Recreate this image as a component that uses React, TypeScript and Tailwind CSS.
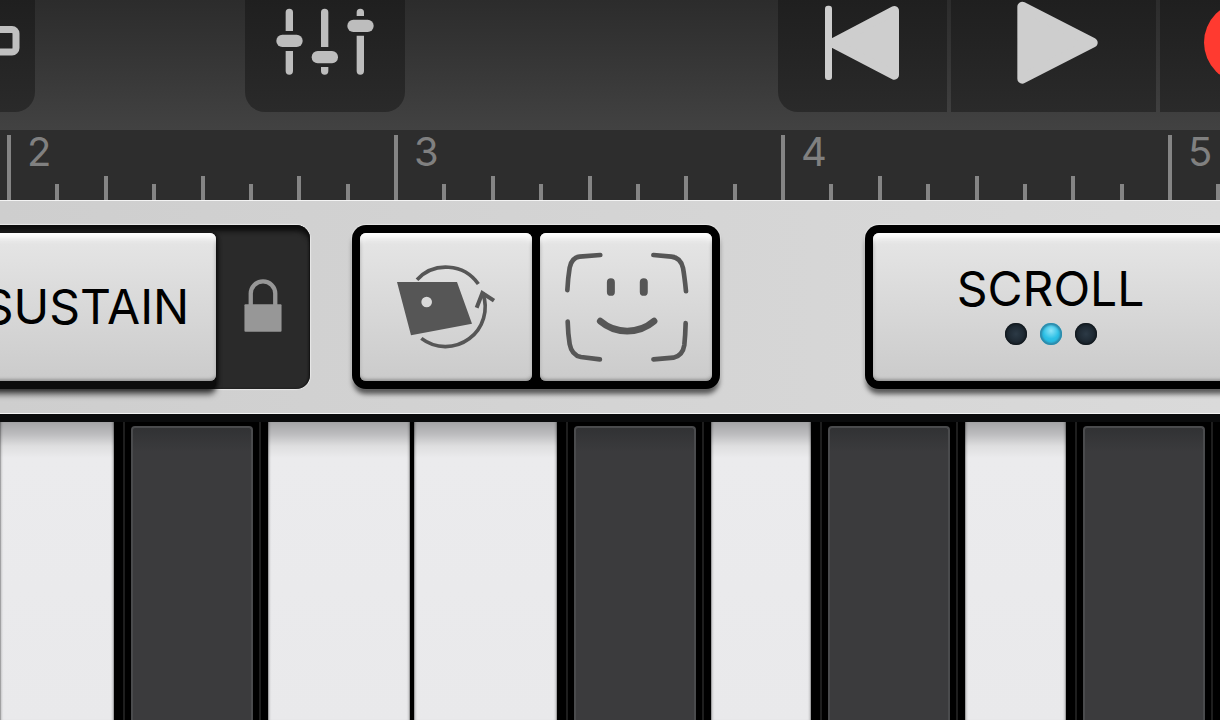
import type { ReactNode } from "react";

const WELL = "rounded-[14px] bg-black p-2 shadow-[0_6px_5px_-1px_rgba(0,0,0,0.6),0_0_1px_1px_rgba(255,255,255,0.4)]";
const CAP =
  "rounded-[6px] bg-linear-to-b from-[#e6e6e6] to-[#cbcbcb] shadow-[inset_0_8px_6px_-3px_#ffffff,inset_0_-4px_3px_-2px_rgba(120,120,120,0.6),inset_3px_0_3px_-2px_rgba(160,160,160,0.7),inset_-3px_0_3px_-2px_rgba(160,160,160,0.7)]";
const SLOT = "flex justify-center bg-linear-to-b from-[#1f1f1f] to-[#2a2a2a]";

function TrackIcon() {
  return (
    <svg viewBox="0 26 20 30" className="mt-[26px] h-[30px] w-[20px]" fill="none" stroke="#c0c0c0" strokeWidth="7" aria-hidden="true">
      <rect x="-20" y="29.5" width="36" height="22.5" rx="4" />
    </svg>
  );
}

function MixerIcon() {
  return (
    <svg viewBox="828 24 294 201" className="mt-2 h-[67px] w-[98px]" fill="#bdbdbd" aria-hidden="true">
      <path d="M857 93V37a11 11 0 0 1 22 0v56zM857 153h22v60a11 11 0 0 1-22 0z" />
      <rect x="829" y="104" width="79" height="37" rx="18" />
      <path d="M963 141V37a11 11 0 0 1 22 0v104zM963 201h22v12a11 11 0 0 1-22 0z" />
      <rect x="935" y="153" width="79" height="37" rx="18" />
      <path d="M1070 48V37a11 11 0 0 1 22 0v11zM1070 107h22v106a11 11 0 0 1-22 0z" />
      <rect x="1042" y="59" width="79" height="37" rx="18" />
    </svg>
  );
}

function RewindIcon() {
  return (
    <svg viewBox="198 15 225 228" className="mt-[5px] h-[76px] w-[75px]" fill="#cecece" stroke="#cecece" strokeLinejoin="round" aria-hidden="true">
      <rect x="198" y="17" width="21" height="223" rx="9" stroke="none" />
      <path d="M222 129L406 32V225Z" strokeWidth="28" />
    </svg>
  );
}

function PlayIcon() {
  return (
    <svg viewBox="771 3 246 249" className="mt-px h-[83px] w-[82px]" fill="#cecece" stroke="#cecece" strokeWidth="30" strokeLinejoin="round" aria-hidden="true">
      <path d="M787 20V236L998 128Z" />
    </svg>
  );
}

function LockIcon() {
  return (
    <svg viewBox="733 233 114 160" className="mb-1 h-[53px] w-[38px]" aria-hidden="true">
      <path d="M753 312V277a37 37 0 0 1 74 0v35" fill="none" stroke="#979797" strokeWidth="13" />
      <rect x="734" y="309" width="112" height="83" rx="3" fill="#979797" />
    </svg>
  );
}

function TiltIcon() {
  return (
    <svg viewBox="174 162 300 252" className="h-[84px] w-[100px]" fill="none" stroke="#565656" aria-hidden="true">
      <path d="M237 206A119 119 0 0 1 421 219" strokeWidth="11" />
      <path d="M250 382A119 119 0 0 0 434 246" strokeWidth="11" />
      <path d="M416 290L433 246L468 269" strokeWidth="12" />
      <path d="M177 213H357L402 338L219 373ZM282 273a16 16 0 1 0-32 0a16 16 0 1 0 32 0Z" fill="#565656" fillRule="evenodd" stroke="none" />
    </svg>
  );
}

function FaceIcon() {
  return (
    <svg viewBox="670 128 374 334" className="h-[111px] w-[125px]" fill="none" stroke="#565656" strokeWidth="14" strokeLinecap="round" aria-hidden="true">
      <path d="M778 137L716 142Q692 145 686 175Q681 205 679 243" />
      <path d="M938 137L992 142Q1020 145 1027 176Q1032 205 1036 246" />
      <path d="M680 337Q681 375 686 405Q692 438 720 444L777 451" />
      <path d="M1035 342Q1034 380 1031 408Q1026 440 998 446L938 451" />
      <path d="M810 219V248M909 219V248" strokeWidth="24" />
      <path d="M778 336C825 376 893 376 940 336" strokeWidth="20" />
    </svg>
  );
}

function Bar({ number }: { number: number }) {
  return (
    <li className="relative grid w-[387px] shrink-0 grid-cols-8 items-end">
      <i className="h-[65px] w-1 bg-[#858585]" />
      <i className="h-4 w-1 bg-[#858585]" />
      <i className="h-6 w-1 bg-[#858585]" />
      <i className="h-4 w-1 bg-[#858585]" />
      <i className="h-6 w-1 bg-[#858585]" />
      <i className="h-4 w-1 bg-[#858585]" />
      <i className="h-6 w-1 bg-[#858585]" />
      <i className="h-4 w-1 bg-[#858585]" />
      <span className="absolute top-0.5 left-5 text-[40px] leading-10 text-[#808080]">{number}</span>
    </li>
  );
}

function WhiteKey({ size, label }: { size: string; label: string }) {
  return (
    <button
      type="button"
      aria-label={label}
      className={`${size} bg-[linear-gradient(to_bottom,#a4a4a6_0px,#bcbcbe_12px,#dededf_24px,#ebebed_36px,#e9e9eb_100%)] shadow-[inset_1px_0_0_rgba(0,0,0,0.2),inset_-1px_0_0_rgba(0,0,0,0.2),inset_3px_0_2px_-1px_rgba(0,0,0,0.14),inset_-3px_0_2px_-1px_rgba(0,0,0,0.14)]`}
    />
  );
}

function BlackKey({ label }: { label: string }) {
  return (
    <button type="button" aria-label={label} className="flex w-[154px] shrink-0 bg-black pr-[7px] pl-[9px]">
      <span className="flex flex-1 self-stretch border-x-2 border-[#1e1e1e] px-1.5 pt-1">
        <span className="flex-1 rounded-t-[4px] border-x-2 border-t-2 border-[#4a4b4d] bg-[linear-gradient(to_bottom,#313234_0px,#3b3b3d_24px,#3b3b3d_100%)]" />
      </span>
    </button>
  );
}

function PadButton({ label, children }: { label: string; children: ReactNode }) {
  return (
    <button type="button" aria-label={label} className={`${CAP} flex h-[148px] w-[172px] items-center justify-center`}>
      {children}
    </button>
  );
}

export default function App() {
  return (
    <main className="flex min-h-screen w-full flex-col overflow-hidden bg-black font-['Inter',sans-serif]">
      <header className="flex h-[130px] items-start bg-linear-to-b from-[#2c2c2c] to-[#424242]">
        <button type="button" aria-label="Tracks" className={`${SLOT} h-28 w-[35px] justify-start rounded-br-[20px]`}>
          <TrackIcon />
        </button>
        <button type="button" aria-label="Mixer" className={`${SLOT} ml-[210px] h-28 w-[160px] rounded-b-[20px]`}>
          <MixerIcon />
        </button>
        <div className="ml-auto flex h-28 w-[442px] gap-1 overflow-hidden rounded-bl-[20px]">
          <button type="button" aria-label="Go to beginning" className={`${SLOT} w-[169px] shrink-0`}>
            <RewindIcon />
          </button>
          <button type="button" aria-label="Play" className={`${SLOT} w-[205px] shrink-0 pl-2`}>
            <PlayIcon />
          </button>
          <button type="button" aria-label="Record" className={`${SLOT} w-[168px] shrink-0`}>
            <span className="mt-0.5 size-[81px] rounded-full bg-[#ff3a30]" />
          </button>
        </div>
      </header>

      <ol className="flex h-[70px] bg-[#2d2d2d] pl-[7px]">
        <Bar number={2} />
        <Bar number={3} />
        <Bar number={4} />
        <Bar number={5} />
      </ol>

      <section className="flex items-start border-y border-[#f4f4f4] bg-linear-to-r from-[#cecece] to-[#dadada] py-6">
        <div className="-ml-10 flex h-[164px] items-start rounded-r-[14px] bg-[#2a2a2a] pt-2 shadow-[inset_0_8px_5px_-2px_#0c0c0c,inset_-1px_0_2px_#111111,0_0_1px_1px_rgba(255,255,255,0.5)]">
          <div className="rounded-[6px] bg-[#0c0c0c] pb-2 shadow-[0_6px_6px_-1px_rgba(0,0,0,0.7),2px_0_4px_rgba(0,0,0,0.6)]">
            <button type="button" className={`${CAP} h-[148px] w-[256px] pr-1 text-center text-[48px] leading-[48px] whitespace-nowrap text-black`}>
              SUSTAIN
            </button>
          </div>
          <button type="button" aria-label="Lock sustain" className="flex h-[148px] w-[94px] items-center justify-center">
            <LockIcon />
          </button>
        </div>

        <div className={`${WELL} ml-[42px] flex gap-2`}>
          <PadButton label="Tilt control">
            <TiltIcon />
          </PadButton>
          <PadButton label="Face control">
            <FaceIcon />
          </PadButton>
        </div>

        <div className={`${WELL} -mr-4 ml-auto w-[371px] shrink-0`}>
          <button type="button" className={`${CAP} flex h-[148px] w-full flex-col items-center justify-center gap-2.5 pb-1 text-[48px] leading-[48px] text-black`}>
            SCROLL
            <span className="flex gap-[13px]">
              <i className="size-[22px] rounded-full bg-radial from-[#2c3a46] to-[#121a21] shadow-[inset_0_0_2px_1px_#10161b]" />
              <i className="size-[22px] rounded-full bg-[radial-gradient(circle_at_50%_35%,#8ce4f8_0%,#2cc0e6_45%,#1fb4da_100%)] shadow-[inset_0_0_2px_2px_#2f87a6]" />
              <i className="size-[22px] rounded-full bg-radial from-[#2c3a46] to-[#121a21] shadow-[inset_0_0_2px_1px_#10161b]" />
            </span>
          </button>
        </div>
      </section>

      <section className="flex flex-1 border-t-8 border-[#0a0b0c]">
        <WhiteKey label="A" size="flex-[114_1_0%]" />
        <BlackKey label="A sharp" />
        <WhiteKey label="B" size="flex-[142_1_0%]" />
        <span className="w-1 bg-black" />
        <WhiteKey label="C" size="flex-[143_1_0%]" />
        <BlackKey label="C sharp" />
        <WhiteKey label="D" size="flex-[100_1_0%]" />
        <BlackKey label="D sharp" />
        <WhiteKey label="E" size="flex-[101_1_0%]" />
        <BlackKey label="F sharp" />
      </section>
    </main>
  );
}
